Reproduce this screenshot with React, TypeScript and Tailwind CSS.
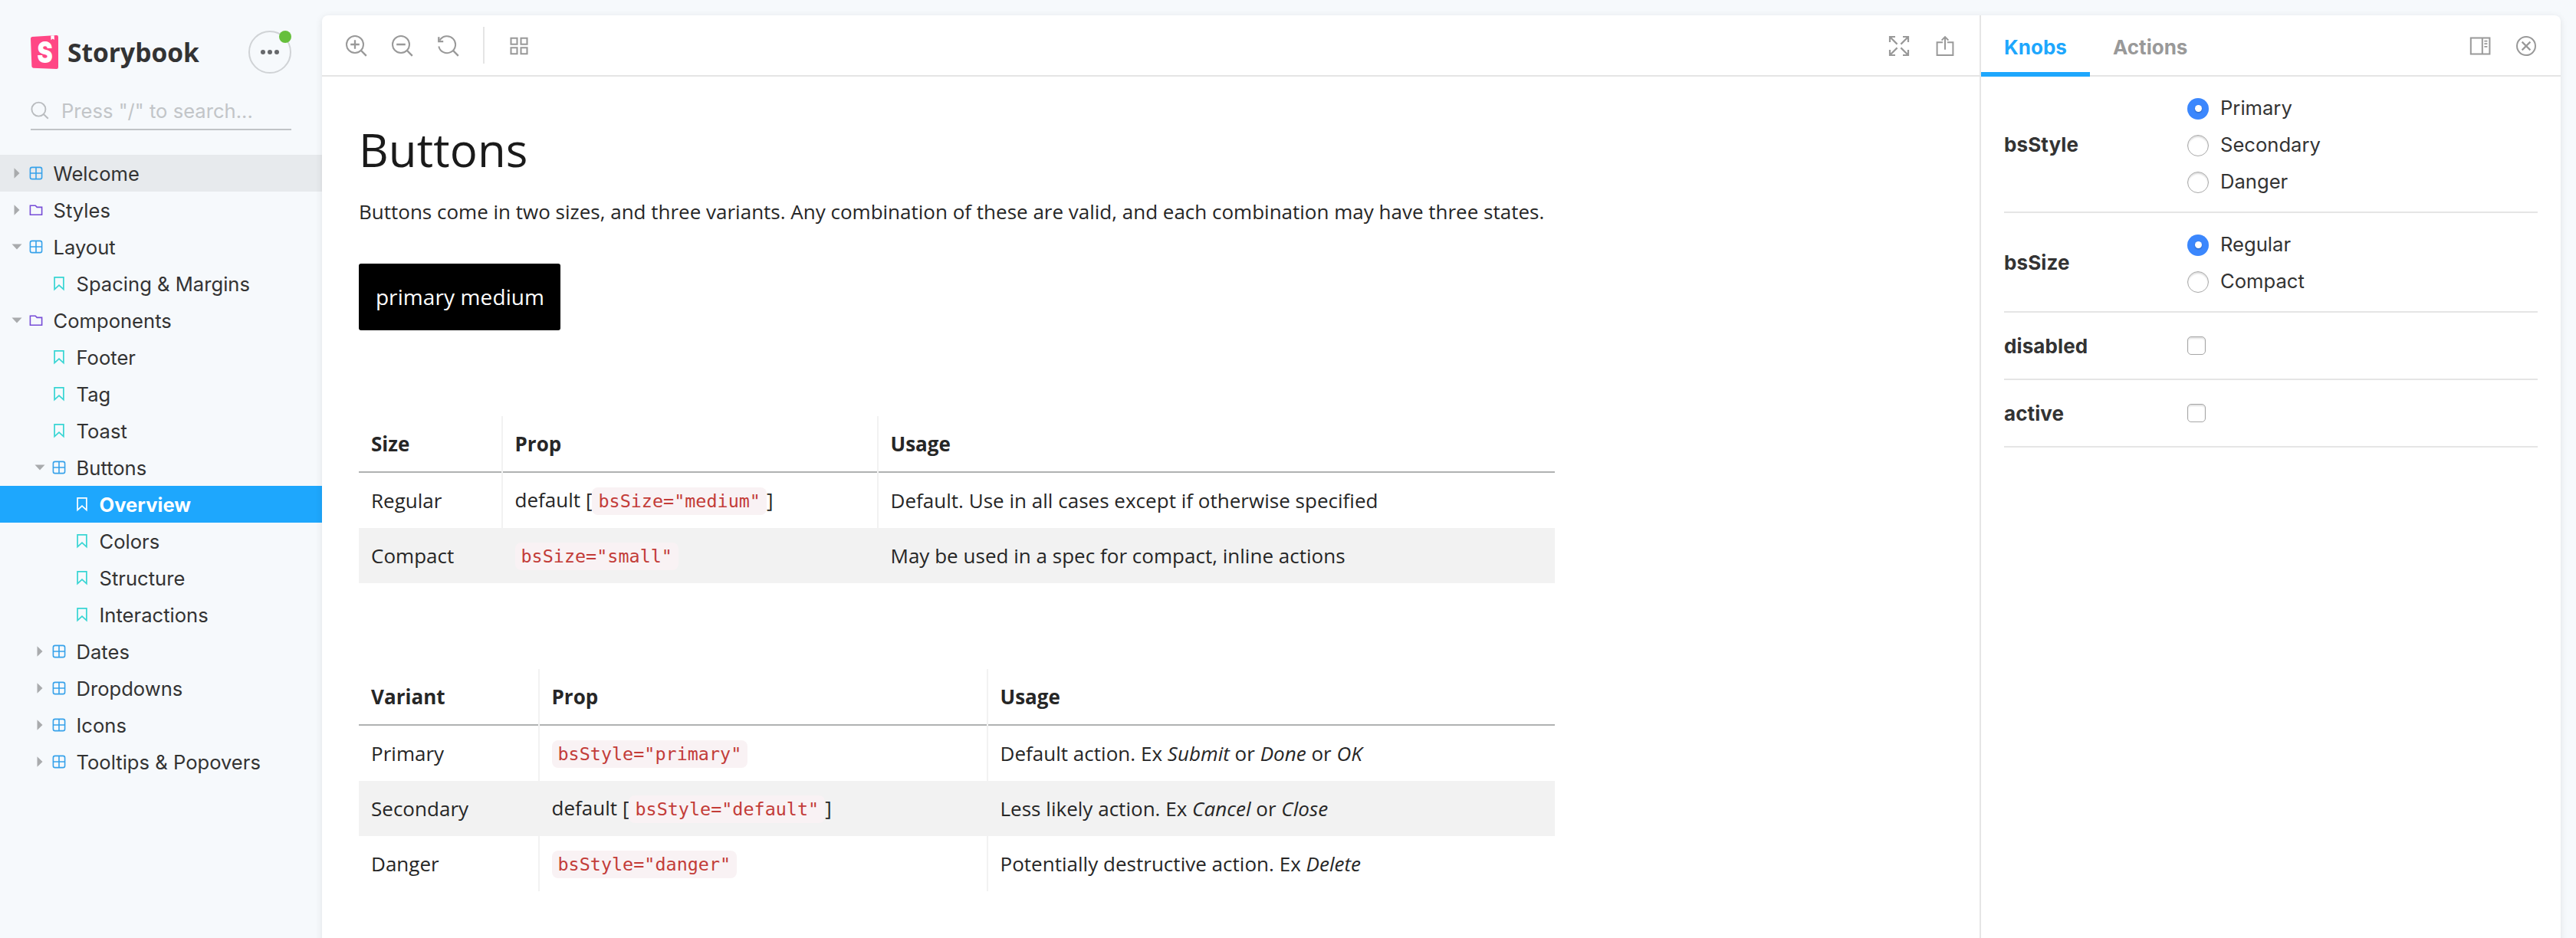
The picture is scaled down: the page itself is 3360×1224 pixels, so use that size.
import React from "react";

type Kind = "component" | "folder" | "story";

interface TreeItem {
  label: string;
  kind: Kind;
  depth: 0 | 1 | 2;
  open?: boolean;
  state?: "hover" | "selected";
}

const TREE: TreeItem[] = [
  { label: "Welcome", kind: "component", depth: 0, state: "hover" },
  { label: "Styles", kind: "folder", depth: 0 },
  { label: "Layout", kind: "component", depth: 0, open: true },
  { label: "Spacing & Margins", kind: "story", depth: 1 },
  { label: "Components", kind: "folder", depth: 0, open: true },
  { label: "Footer", kind: "story", depth: 1 },
  { label: "Tag", kind: "story", depth: 1 },
  { label: "Toast", kind: "story", depth: 1 },
  { label: "Buttons", kind: "component", depth: 1, open: true },
  { label: "Overview", kind: "story", depth: 2, state: "selected" },
  { label: "Colors", kind: "story", depth: 2 },
  { label: "Structure", kind: "story", depth: 2 },
  { label: "Interactions", kind: "story", depth: 2 },
  { label: "Dates", kind: "component", depth: 1 },
  { label: "Dropdowns", kind: "component", depth: 1 },
  { label: "Icons", kind: "component", depth: 1 },
  { label: "Tooltips & Popovers", kind: "component", depth: 1 },
];

const INDENT = { 0: "pl-[14px]", 1: "pl-[44px]", 2: "pl-[74px]" };

function KindIcon({ kind, selected }: { kind: Kind; selected: boolean }) {
  if (kind === "component") {
    return (
      <svg width="20" height="20" viewBox="0 0 20 20" fill="none" stroke="#37a2ea" strokeWidth="1.6">
        <rect x="2.4" y="2.4" width="15.2" height="15.2" rx="2.4" />
        <path d="M10 2.4v15.2M2.4 10h15.2" />
      </svg>
    );
  }
  if (kind === "folder") {
    return (
      <svg width="20" height="20" viewBox="0 0 20 20" fill="none" stroke="#774dd7" strokeWidth="1.6">
        <path d="M2.4 16.2V4.2h6.8l2 2.2h6.4v9.8z" />
      </svg>
    );
  }
  return (
    <svg width="20" height="20" viewBox="0 0 20 20" fill="none" stroke={selected ? "#ffffff" : "#37d5d3"} strokeWidth="1.7">
      <path d="M4.1 17.6V1.9h11.8v15.7L10 12.2z" />
    </svg>
  );
}

function TreeRow({ item }: { item: TreeItem }) {
  const selected = item.state === "selected";
  const tone = selected
    ? "bg-[#1ea7fd] text-white font-bold"
    : item.state === "hover"
      ? "bg-[#e7eaed] text-[#333333]"
      : "text-[#333333]";
  return (
    <li className={`flex h-12 items-center text-[25.6px] ${INDENT[item.depth]} ${tone}`}>
      <span className="flex w-4 shrink-0 justify-center">
        {item.kind !== "story" &&
          (item.open ? (
            <svg width="14" height="8" viewBox="0 0 14 8" fill="#a9abad">
              <path d="M.5.5h13L7 7.5z" />
            </svg>
          ) : (
            <svg width="8" height="14" viewBox="0 0 8 14" fill="#a9abad">
              <path d="M.5.2v13.6L7.5 7z" />
            </svg>
          ))}
      </span>
      <span className="mr-[12.5px] ml-[7px] shrink-0">
        <KindIcon kind={item.kind} selected={selected} />
      </span>
      <span className="pt-[3px] whitespace-nowrap">{item.label}</span>
    </li>
  );
}

function Sidebar() {
  return (
    <aside className="flex w-[420px] shrink-0 flex-col">
      <div className="mt-10 flex h-14 items-center justify-between pr-10 pl-10">
        <div className="flex items-center gap-3">
          <svg width="36" height="44" viewBox="0 0 36 44" className="overflow-visible">
            <path
              d="M1.4 40.6L0 4.4a2.2 2.2 0 0 1 2-2.3L33.6.1A2.2 2.2 0 0 1 36 2.3v39.4a2.2 2.2 0 0 1-2.3 2.2L3.5 42.7a2.2 2.2 0 0 1-2.1-2.1z"
              fill="#ff4785"
            />
            <path d="M26.3.5l4.4-.3.2 5.9-2.2-1.7-2.2 1.8z" fill="#ffffff" />
            <text
              transform="translate(18.6 35.6) scale(.8 1)"
              textAnchor="middle"
              fontFamily="Inter, sans-serif"
              fontWeight="900"
              fontSize="38"
              fill="#ffffff"
            >
              S
            </text>
          </svg>
          <span className="font-['Open_Sans',sans-serif] text-[33.6px] leading-[44px] font-bold text-[#333333]">Storybook</span>
        </div>
        <button className="relative flex h-14 w-14 items-center justify-center gap-[2.6px] rounded-full border-2 border-[#d0d3d6]">
          <span className="size-[6.4px] rounded-full bg-[#67696c]" />
          <span className="size-[6.4px] rounded-full bg-[#67696c]" />
          <span className="size-[6.4px] rounded-full bg-[#67696c]" />
          <span className="absolute -top-0.5 -right-0.5 size-4 rounded-full bg-[#66bf3c]" />
        </button>
      </div>
      <div className="mx-10 mt-[22px] flex h-[52px] items-center border-b-2 border-[#c1c4c7] text-[25.6px] text-[#c2c5c8]">
        <svg width="24" height="24" viewBox="0 0 24 24" fill="none" stroke="#b9bcbf" strokeWidth="1.9" className="mt-px mr-4">
          <circle cx="10.4" cy="10.6" r="9" />
          <path d="M16.8 17l6 5.8" />
        </svg>
        <span className="pt-[5px] whitespace-nowrap">Press &quot;/&quot; to search...</span>
      </div>
      <ul className="mt-8">
        {TREE.map((item) => (
          <TreeRow key={item.label} item={item} />
        ))}
      </ul>
    </aside>
  );
}

function ToolIcon({ children, width = 2 }: { children: React.ReactNode; width?: number }) {
  return (
    <svg width="28" height="28" viewBox="0 0 28 28" fill="none" stroke="#999999" strokeWidth={width} className="shrink-0">
      {children}
    </svg>
  );
}

function Toolbar() {
  return (
    <div className="flex h-20 items-center border-b-2 border-[#e5e5e5] pr-[31px] pl-[31px]">
      <div className="flex items-center gap-8 pt-0.5">
        <ToolIcon>
          <circle cx="12" cy="12" r="11" />
          <path d="M20 20l6.8 6.8" strokeWidth="2.4" />
          <path d="M12 6.2v11.6M6.2 12h11.6" strokeWidth="2.3" />
        </ToolIcon>
        <ToolIcon>
          <circle cx="12" cy="12" r="11" />
          <path d="M20 20l6.8 6.8" strokeWidth="2.4" />
          <path d="M6.2 12h11.6" strokeWidth="2.3" />
        </ToolIcon>
        <ToolIcon>
          <path d="M2.6 6.6A11 11 0 1 1 1.3 14.5" />
          <path d="M20 20l6.8 6.8" strokeWidth="2.4" />
          <path d="M1.3 2.2v5.9h5.9" strokeWidth="2.4" />
        </ToolIcon>
      </div>
      <div className="mr-[31px] ml-[31px] h-12 w-0.5 bg-[#e5e5e5]" />
      <div className="pt-0.5">
        <ToolIcon width={2.1}>
          <path d="M3.5 3.8h8v8h-8zM16.5 3.8h8v8h-8zM3.5 16.3h8v8h-8zM16.5 16.3h8v8h-8z" />
        </ToolIcon>
      </div>
      <div className="ml-auto flex items-center gap-8 pt-0.5">
        <ToolIcon width={2.2}>
          <path d="M2 9V2h7M2.2 2.2l9.4 9.4M19 2h7v7M25.8 2.2l-9.4 9.4M2 19v7h7M2.2 25.8l9.4-9.4M19 26h7v-7M25.8 25.8l-9.4-9.4" />
        </ToolIcon>
        <ToolIcon>
          <path d="M11 9.2H3.6V26h20.8V9.2H17M14 18.8V2.4M9.6 6.6L14 2.2l4.4 4.4" />
        </ToolIcon>
      </div>
    </div>
  );
}

function Code({ children }: { children: React.ReactNode }) {
  return (
    <code className="rounded-lg bg-[#f9f2f4] px-2 py-1 font-['DejaVu_Sans_Mono',monospace] text-[23.4px] text-[#c33c38]">
      {children}
    </code>
  );
}

interface DocTableProps {
  columns: string[];
  heads: string[];
  rows: React.ReactNode[][];
}

function DocTable({ columns, heads, rows }: DocTableProps) {
  const divider = (i: number) => (i < 2 ? "border-r-2 border-[#f2f2f2]" : "");
  const pad = (i: number) => (i === 0 ? "pl-4" : "pl-[15.5px]");
  return (
    <table className="w-[1560px] table-fixed border-separate border-spacing-0 text-left text-[26px] leading-9 tracking-[0.02px] whitespace-nowrap">
      <colgroup>
        {columns.map((c, i) => (
          <col key={i} className={c} />
        ))}
      </colgroup>
      <thead>
        <tr>
          {heads.map((h, i) => (
            <th key={h} className={`h-[74px] p-0 pb-0.5 align-middle font-bold shadow-[inset_0_-2px_0_#b0b2b2] ${pad(i)} ${divider(i)}`}>
              {h}
            </th>
          ))}
        </tr>
      </thead>
      <tbody>
        {rows.map((cells, r) => (
          <tr key={r} className={r % 2 === 1 ? "bg-[#f2f2f2]" : ""}>
            {cells.map((cell, i) => (
              <td key={i} className={`h-[72px] p-0 align-middle ${pad(i)} ${divider(i)}`}>
                {cell}
              </td>
            ))}
          </tr>
        ))}
      </tbody>
    </table>
  );
}

function Canvas() {
  return (
    <div className="flex flex-col items-start pt-[54px] pl-12 font-['Open_Sans',sans-serif] text-[#262626]">
      <h1 className="text-[60px] leading-[82px] tracking-[0.1px] text-[#1a1a1a]">Buttons</h1>
      <p className="mt-[22px] text-[26px] leading-9 whitespace-nowrap">
        Buttons come in two sizes, and three variants. Any combination of these are valid, and each combination may have three states.
      </p>
      <button className="mt-[50px] h-[87px] w-[263px] rounded-[3px] bg-black pb-px pl-px text-[28px] leading-[38px] tracking-[0.1px] whitespace-nowrap text-white">
        primary medium
      </button>
      <div className="mt-28">
        <DocTable
          columns={["w-[188px]", "w-[490px]", "w-[882px]"]}
          heads={["Size", "Prop", "Usage"]}
          rows={[
            ["Regular", <>default [<Code>bsSize=&quot;medium&quot;</Code>]</>, "Default. Use in all cases except if otherwise specified"],
            ["Compact", <Code>bsSize=&quot;small&quot;</Code>, "May be used in a spec for compact, inline actions"],
          ]}
        />
      </div>
      <div className="mt-28">
        <DocTable
          columns={["w-[236px]", "w-[585px]", "w-[739px]"]}
          heads={["Variant", "Prop", "Usage"]}
          rows={[
            ["Primary", <Code>bsStyle=&quot;primary&quot;</Code>, <>Default action. Ex <em>Submit</em> or <em>Done</em> or <em>OK</em></>],
            ["Secondary", <>default [<Code>bsStyle=&quot;default&quot;</Code>]</>, <>Less likely action. Ex <em>Cancel</em> or <em>Close</em></>],
            ["Danger", <Code>bsStyle=&quot;danger&quot;</Code>, <>Potentially destructive action. Ex <em>Delete</em></>],
          ]}
        />
      </div>
    </div>
  );
}

function Radio({ label, checked }: { label: string; checked?: boolean }) {
  return (
    <label className="flex h-12 items-center text-[25.6px]">
      {checked ? (
        <span className="mt-[3px] flex size-7 items-center justify-center rounded-full bg-[#3b87fd]">
          <span className="size-[9px] rounded-full bg-white shadow-[0_1px_2px_rgba(0,0,0,0.3)]" />
        </span>
      ) : (
        <span className="mt-[3px] size-7 rounded-full border border-[#a8a8a8] bg-white shadow-[inset_0_2px_2px_rgba(0,0,0,0.14)]" />
      )}
      <span className="ml-[15px] pt-[3px]">{label}</span>
    </label>
  );
}

function Checkbox() {
  return <span className="block size-6 rounded-[5px] border border-[#a6a6a6] bg-white shadow-[inset_0_2px_2px_rgba(0,0,0,0.12)]" />;
}

function Knob({ name, children }: { name: string; children: React.ReactNode }) {
  return (
    <div className="grid grid-cols-[239px_1fr] items-center border-b-2 border-[#e5e5e5] py-4">
      <span className="pt-0.5 text-[26px] leading-8 font-bold tracking-[0.1px]">{name}</span>
      <div>{children}</div>
    </div>
  );
}

function AddonPanel() {
  return (
    <section className="flex w-[758px] shrink-0 flex-col border-l-2 border-[#e5e5e5] text-[#333333]">
      <div className="flex h-20 border-b-2 border-[#e5e5e5] pr-[31px] text-[26px] font-bold">
        <div className="-mb-0.5 flex w-[142px] items-center justify-center border-b-6 border-[#1ea7fd] pt-2 text-[#1ea7fd]">Knobs</div>
        <div className="flex items-center pt-1 pl-[30px] text-[#999999]">Actions</div>
        <div className="ml-auto flex items-center gap-8 pt-0.5">
          <ToolIcon>
            <path d="M1.8 3.6h24.6v21H1.8zM16.8 3.6v21" />
            <path d="M19.4 7.6h4M19.4 11.2h4M19.4 14.8h4" strokeWidth="1.7" />
          </ToolIcon>
          <ToolIcon>
            <circle cx="14" cy="14" r="12" />
            <path d="M8.6 8.6l10.8 10.8M19.4 8.6L8.6 19.4" strokeWidth="2.2" />
          </ToolIcon>
        </div>
      </div>
      <div className="flex flex-col px-[30px]">
        <Knob name="bsStyle">
          <Radio label="Primary" checked />
          <Radio label="Secondary" />
          <Radio label="Danger" />
        </Knob>
        <Knob name="bsSize">
          <Radio label="Regular" checked />
          <Radio label="Compact" />
        </Knob>
        <Knob name="disabled">
          <div className="flex h-[54px] items-center">
            <Checkbox />
          </div>
        </Knob>
        <Knob name="active">
          <div className="flex h-[54px] items-center">
            <Checkbox />
          </div>
        </Knob>
      </div>
    </section>
  );
}

export default function App() {
  return (
    <div className="flex h-[1224px] w-[3360px] overflow-hidden bg-[#f6f9fc] font-[Inter,sans-serif] leading-normal">
      <Sidebar />
      <main className="mt-5 flex h-[1240px] w-[2920px] shrink-0 overflow-hidden rounded-[8px] bg-white shadow-[0_2px_10px_rgba(0,0,0,0.1)]">
        <section className="flex min-w-0 flex-1 flex-col">
          <Toolbar />
          <Canvas />
        </section>
        <AddonPanel />
      </main>
    </div>
  );
}
